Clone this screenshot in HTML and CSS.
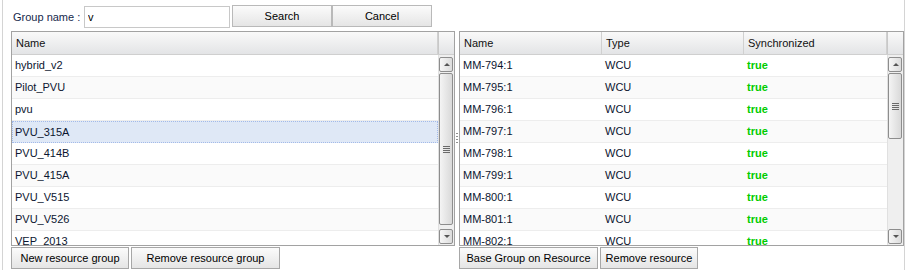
FILE: index.html
```html
<!DOCTYPE html>
<html lang="en">
<head>
  <meta charset="UTF-8" />
  <title>Resource Groups</title>
  <link rel="stylesheet" href="styles.css">
</head>
<body>
  <div class="page">
    <div class="search-bar">
      <label class="search-label">Group name :</label>
      <input class="search-input" type="text" value="v">
      <button class="btn btn-top">Search</button>
      <button class="btn btn-top">Cancel</button>
    </div>

    <div class="panels">
      <div class="panel panel-left">
        <div class="grid">
          <div class="grid-head">
            <div class="hcell hcell-fill">Name</div>
            <div class="hcell hcell-scroll"></div>
          </div>
          <div class="grid-body">
            <div class="rows">
              <div class="row"><div class="cell cell-fill">hybrid_v2</div></div>
              <div class="row alt"><div class="cell cell-fill">Pilot_PVU</div></div>
              <div class="row"><div class="cell cell-fill">pvu</div></div>
              <div class="row alt selected"><div class="cell cell-fill">PVU_315A</div></div>
              <div class="row"><div class="cell cell-fill">PVU_414B</div></div>
              <div class="row alt"><div class="cell cell-fill">PVU_415A</div></div>
              <div class="row"><div class="cell cell-fill">PVU_V515</div></div>
              <div class="row alt"><div class="cell cell-fill">PVU_V526</div></div>
              <div class="row"><div class="cell cell-fill">VEP_2013</div></div>
            </div>
            <div class="vscroll">
              <div class="vs-btn vs-up"></div>
              <div class="vs-track"><div class="vs-thumb thumb-long"><span class="grip-lines"></span></div></div>
              <div class="vs-btn vs-down"></div>
            </div>
          </div>
        </div>
        <div class="btn-bar">
          <button class="btn btn-new">New resource group</button>
          <button class="btn btn-remove-group">Remove resource group</button>
        </div>
      </div>

      <div class="splitter"><span class="splitter-grip"></span></div>

      <div class="panel panel-right">
        <div class="grid">
          <div class="grid-head">
            <div class="hcell col-name">Name</div>
            <div class="hcell col-type">Type</div>
            <div class="hcell col-sync">Synchronized</div>
            <div class="hcell hcell-scroll"></div>
          </div>
          <div class="grid-body">
            <div class="rows">
              <div class="row"><div class="cell col-name">MM-794:1</div><div class="cell col-type">WCU</div><div class="cell col-sync sync-true">true</div></div>
              <div class="row alt"><div class="cell col-name">MM-795:1</div><div class="cell col-type">WCU</div><div class="cell col-sync sync-true">true</div></div>
              <div class="row"><div class="cell col-name">MM-796:1</div><div class="cell col-type">WCU</div><div class="cell col-sync sync-true">true</div></div>
              <div class="row alt"><div class="cell col-name">MM-797:1</div><div class="cell col-type">WCU</div><div class="cell col-sync sync-true">true</div></div>
              <div class="row"><div class="cell col-name">MM-798:1</div><div class="cell col-type">WCU</div><div class="cell col-sync sync-true">true</div></div>
              <div class="row alt"><div class="cell col-name">MM-799:1</div><div class="cell col-type">WCU</div><div class="cell col-sync sync-true">true</div></div>
              <div class="row"><div class="cell col-name">MM-800:1</div><div class="cell col-type">WCU</div><div class="cell col-sync sync-true">true</div></div>
              <div class="row alt"><div class="cell col-name">MM-801:1</div><div class="cell col-type">WCU</div><div class="cell col-sync sync-true">true</div></div>
              <div class="row"><div class="cell col-name">MM-802:1</div><div class="cell col-type">WCU</div><div class="cell col-sync sync-true">true</div></div>
            </div>
            <div class="vscroll">
              <div class="vs-btn vs-up"></div>
              <div class="vs-track"><div class="vs-thumb thumb-short"><span class="grip-lines"></span></div></div>
              <div class="vs-btn vs-down"></div>
            </div>
          </div>
        </div>
        <div class="btn-bar">
          <button class="btn btn-base">Base Group on Resource</button>
          <button class="btn btn-remove-res">Remove resource</button>
        </div>
      </div>
    </div>
  </div>
</body>
</html>
```

FILE: styles.css
```css
body {
  margin: 0;
  font-family: 'Liberation Sans', Arial, sans-serif;
  font-size: 11px;
  color: #000;
  background: #fff;
}

.page {
  margin-left: 2px;
  width: 903px;
  height: 270px;
  box-sizing: border-box;
  border-left: 1px solid #d4d4d4;
  border-right: 1px solid #d4d4d4;
  padding-left: 8px;
}

/* search bar */
.search-bar {
  display: flex;
  align-items: flex-start;
  height: 31px;
  padding-top: 5px;
  box-sizing: border-box;
}
.search-label {
  margin: 0 0 0 2px;
  width: 71px;
  line-height: 24px;
  white-space: nowrap;
  color: #15284b;
}
.search-input {
  width: 146px;
  height: 22px;
  margin: 1px 2px 0 0;
  box-sizing: border-box;
  border: 1px solid #c8c8c8;
  padding: 0 3px;
  font-family: inherit;
  font-size: 11px;
}

.btn {
  height: 22px;
  box-sizing: border-box;
  border: 1px solid #a7a7a7;
  background: linear-gradient(#fbfbfb, #e5e5e5);
  font-family: inherit;
  font-size: 11px;
  color: #000;
  padding: 0;
  cursor: pointer;
}
.btn-top {
  width: 100px;
  border-color: #b9b9b9;
}

/* panels */
.panels {
  display: flex;
}
.panel-left {
  width: 444px;
}
.panel-right {
  width: 445px;
}
.splitter {
  width: 4px;
  height: 214px;
  display: flex;
  align-items: center;
  justify-content: center;
}
.splitter-grip {
  width: 2px;
  height: 11px;
  background: repeating-linear-gradient(#8e8e8e 0 1px, transparent 1px 3px);
}

/* grid */
.grid {
  height: 215px;
  box-sizing: border-box;
  border: 1px solid #a2a2a2;
  display: flex;
  flex-direction: column;
  overflow: hidden;
}
.grid-head {
  display: flex;
  height: 23px;
  box-sizing: border-box;
  border-bottom: 1px solid #cfcfcf;
  background: linear-gradient(#f9f9f9, #e3e4e6);
  flex-shrink: 0;
}
.hcell {
  box-sizing: border-box;
  padding-left: 4px;
  line-height: 22px;
  border-right: 1px solid #d0d0d0;
  color: #111;
}
.hcell-fill {
  flex: 1;
}
.hcell-scroll {
  width: 16px;
  border-right: none;
  border-left: 1px solid #c8c8c8;
}

.grid-body {
  display: flex;
  flex: 1;
  overflow: hidden;
}
.rows {
  flex: 1;
  overflow: hidden;
}
.row {
  display: flex;
  height: 22px;
  box-sizing: border-box;
  border-bottom: 1px solid #ededed;
  background: #fff;
}
.row.alt {
  background: #fafafa;
}
.row.selected {
  background: #dfe8f6;
  border: 1px dotted #a3bae9;
}
.cell {
  box-sizing: border-box;
  padding-left: 3px;
  line-height: 21px;
  white-space: nowrap;
  color: #0b1530;
}
.row.selected .cell {
  line-height: 20px;
  padding-left: 2px;
}
.cell-fill {
  flex: 1;
}

.col-name {
  width: 142px;
}
.col-type {
  width: 142px;
}
.col-sync {
  width: 143px;
}
.sync-true {
  color: #00cc00;
  font-weight: bold;
}

/* scrollbar */
.vscroll {
  width: 16px;
  flex-shrink: 0;
  display: flex;
  flex-direction: column;
  background: #efefef;
  border-left: 1px solid #e0e0e0;
  box-sizing: border-box;
  padding: 2px 1px 1px 0;
}
.vs-btn {
  height: 15px;
  box-sizing: border-box;
  border: 1px solid #8d8d8d;
  border-radius: 2px;
  background: linear-gradient(to right, #f6f6f6, #dcdcdc);
  position: relative;
}
.vs-btn::after {
  content: "";
  position: absolute;
  left: 4px;
  top: 5px;
  border-left: 3px solid transparent;
  border-right: 3px solid transparent;
}
.vs-up::after {
  border-bottom: 3px solid #555;
}
.vs-down::after {
  border-top: 3px solid #555;
}
.vs-track {
  flex: 1;
  padding-top: 1px;
}
.vs-thumb {
  box-sizing: border-box;
  border: 1px solid #8d8d8d;
  border-radius: 2px;
  background: linear-gradient(to right, #f4f4f4, #d9d9d9);
  display: flex;
  align-items: center;
  justify-content: center;
}
.thumb-long {
  height: 152px;
}
.thumb-short {
  height: 66px;
}
.grip-lines {
  width: 7px;
  height: 7px;
  background: repeating-linear-gradient(#6a6a6a 0 1px, transparent 1px 2px);
}

/* bottom buttons */
.btn-bar {
  display: flex;
  gap: 2px;
  padding-top: 1px;
}
.btn-new {
  width: 118px;
}
.btn-remove-group {
  width: 149px;
}
.btn-base {
  width: 139px;
}
.btn-remove-res {
  width: 98px;
}
```
